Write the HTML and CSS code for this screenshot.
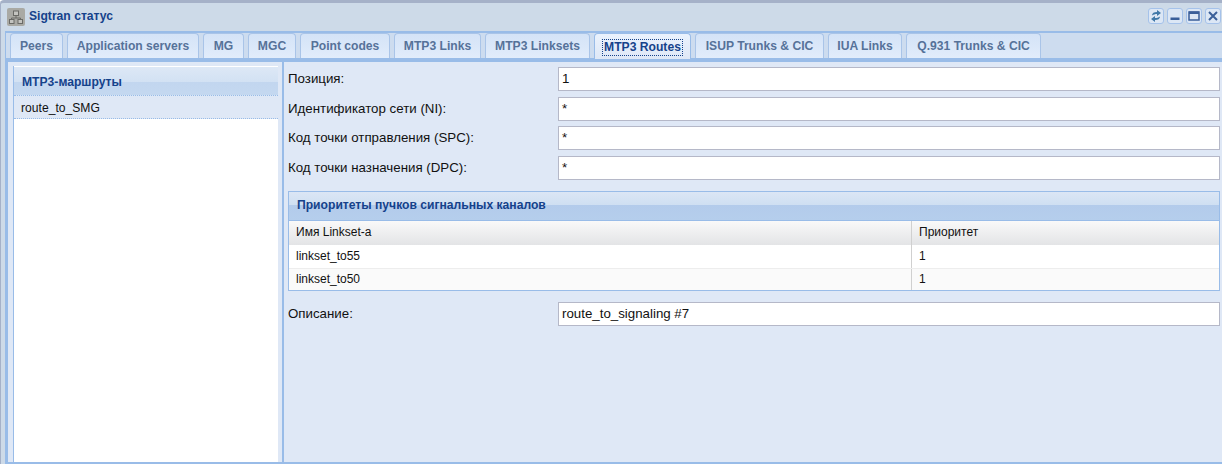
FILE: index.html
```html
<!DOCTYPE html>
<html lang="ru">
<head>
<meta charset="utf-8">
<title>Sigtran статус</title>
<link rel="stylesheet" href="styles.css">
</head>
<body>
<div class="window">
  <header class="titlebar">
    <span class="appicon">
      <svg width="18" height="18" viewBox="0 0 18 18"><rect width="18" height="18" rx="2" fill="#a9a9a4"/><path d="M9 7v3M4.500 12V10h9v2" fill="none" stroke="#6a6a66"/><rect x="6.500" y="3" width="5" height="4.500" fill="#c4c4c0" stroke="#6a6a66"/><rect x="2.500" y="11.500" width="4.500" height="4" fill="#c4c4c0" stroke="#6a6a66"/><rect x="11" y="11.500" width="4.500" height="4" fill="#c4c4c0" stroke="#6a6a66"/></svg>
    </span>
    <span class="title">Sigtran статус</span>
    <span class="tools">
      <span class="tool"><svg width="14" height="14" viewBox="0 0 14 14"><path d="M3 6.500C3 4 5 3 8 3V1l4 3-4 3V5C6 5 5 5.500 3 6.500zM11 7.500C11 10 9 11 6 11v2L2 10l4-3v2c2 0 3-.5 5-1.500z" fill="#3f78a8"/></svg></span>
      <span class="tool"><svg width="14" height="14" viewBox="0 0 14 14"><rect x="2.500" y="8.500" width="9" height="2.500" fill="#3a5f99"/></svg></span>
      <span class="tool"><svg width="14" height="14" viewBox="0 0 14 14"><rect x="2" y="3" width="10" height="8" fill="none" stroke="#3a5f99" stroke-width="1.500"/><rect x="2" y="2.500" width="10" height="2.500" fill="#3a5f99"/></svg></span>
      <span class="tool"><svg width="14" height="14" viewBox="0 0 14 14"><path d="M3 3l8 8M11 3l-8 8" stroke="#3a5f99" stroke-width="2"/></svg></span>
    </span>
  </header>
  <div class="tabpanel">
    <nav class="tabs">
      <a class="tab w-peers"><span>Peers</span></a>
      <a class="tab w-as"><span>Application servers</span></a>
      <a class="tab w-mg"><span>MG</span></a>
      <a class="tab w-mgc"><span>MGC</span></a>
      <a class="tab w-pc"><span>Point codes</span></a>
      <a class="tab w-links"><span>MTP3 Links</span></a>
      <a class="tab w-linksets"><span>MTP3 Linksets</span></a>
      <a class="tab active w-routes"><span>MTP3 Routes</span></a>
      <a class="tab w-isup"><span>ISUP Trunks &amp; CIC</span></a>
      <a class="tab w-iua"><span>IUA Links</span></a>
      <a class="tab w-q931"><span>Q.931 Trunks &amp; CIC</span></a>
    </nav>
    <div class="body">
      <aside class="side">
        <div class="sidebox">
          <div class="band side-band">МТР3-маршруты</div>
          <div class="side-item">route_to_SMG</div>
        </div>
      </aside>
      <main class="form">
        <div class="row"><label>Позиция:</label><div class="input">1</div></div>
        <div class="row"><label>Идентификатор сети (NI):</label><div class="input">*</div></div>
        <div class="row"><label>Код точки отправления (SPC):</label><div class="input">*</div></div>
        <div class="row"><label>Код точки назначения (DPC):</label><div class="input">*</div></div>
        <section class="group">
          <div class="band group-band">Приоритеты пучков сигнальных каналов</div>
          <div class="grid head"><div>Имя Linkset-а</div><div>Приоритет</div></div>
          <div class="grid line"><div>linkset_to55</div><div>1</div></div>
          <div class="grid line alt"><div>linkset_to50</div><div>1</div></div>
        </section>
        <div class="row"><label>Описание:</label><div class="input">route_to_signaling #7</div></div>
      </main>
    </div>
  </div>
</div>
</body>
</html>
```
FILE: styles.css
```css
html, body { margin: 0; height: 100%; overflow: hidden; }
body { font: 13px/16px "Liberation Sans", Arial, sans-serif; color: #111; background: #fff; }
.window { box-sizing: border-box; width: 1222px; height: 464px; background: #cddae8; border-top: 3px solid #a5b1c8; border-left: 1px solid #a5b1c8; border-radius: 4px 0 0 0; display: flex; flex-direction: column; padding-left: 4px; }
.titlebar { flex: none; height: 28px; display: flex; align-items: center; margin-left: -1px; padding: 0 1px 0 3px; }
.appicon { width: 18px; height: 18px; display: block; margin-top: -1px; }
.appicon svg { display: block; }
.title { margin-left: 4px; margin-top: -2px; font-weight: bold; font-size: 12.13px; color: #15428b; }
.tools { margin-left: auto; display: flex; gap: 3px; margin-top: -3px; }
.tool { box-sizing: border-box; width: 16px; height: 16px; background: #dce7f5; border: 1px solid #a5c2ea; border-radius: 3px; display: block; overflow: hidden; }
.tool svg { display: block; margin: 0; }
.tabpanel { flex: 1; min-height: 0; display: flex; flex-direction: column; border-top: 2px solid #99bce8; border-left: 1px solid #99bce8; background: #dfe8f6; }
.tabs { flex: none; height: 25px; display: flex; gap: 4px; padding-left: 4px; background: #cddcef; border-bottom: 4px solid #99bce8; }
.tab { box-sizing: border-box; height: 25px; display: flex; align-items: center; justify-content: center; background: linear-gradient(#d4e3f7, #e1ecfb); border: 1px solid #a9c4e8; border-bottom: 0; border-radius: 4px 4px 0 0; font-weight: bold; font-size: 12.13px; color: #567299; padding-top: 1px; }
.tab span { display: block; padding: 0 1px; border: 1px solid transparent; line-height: 15px; }
.tab.active { height: 26px; background: linear-gradient(#eaf2fd, #dfe8f6); color: #15428b; position: relative; border-color: #99bce8; }
.tab.active span { border: 1px dotted #15428b; }
.w-peers { width: 53px; } .w-as { width: 132px; } .w-mg { width: 41px; } .w-mgc { width: 48px; }
.w-pc { width: 90px; } .w-links { width: 87px; } .w-linksets { width: 105px; } .w-routes { width: 97px; }
.w-isup { width: 129px; } .w-iua { width: 74px; } .w-q931 { width: 135px; }
.body { flex: 1; min-height: 0; display: flex; border-bottom: 2px solid #99bce8; border-left: 3px solid #99bce8; margin-left: -1px; }
.side { flex: none; width: 265px; padding: 4px 4px 0 5px; border-right: 2px solid #99bce8; }
.sidebox { height: 100%; background: #fff; border-left: 1px solid #99bce8; display: flex; flex-direction: column; }
.band { font-weight: bold; font-size: 12.13px; color: #15428b; background: linear-gradient(#dbe6f5 0, #cfdff2 50%, #b3cbeb 50%, #b5ceec 100%); box-sizing: border-box; }
.side-band { height: 29px; padding: 7px 0 0 8px; border-bottom: 1px dotted #99bce8; margin-top: 1px; background: linear-gradient(#dde8f6 0, #d2e1f3 55%, #c2d6ef 55%, #c4d8f0 100%); }
.side-item { height: 23px; box-sizing: border-box; padding: 4px 0 0 7px; background: #dfe8f6; border-bottom: 1px dotted #99bce8; font-size: 12.13px; }
.form { flex: 1; min-width: 0; padding: 5px 2px 0 4px; }
.row { display: flex; align-items: center; height: 24px; margin-bottom: 5.500px; font-size: 13.3px; }
.row label { flex: none; width: 270px; }
.input { box-sizing: border-box; flex: 1; height: 24px; background: #fff; border: 1px solid #b5b8c8; padding: 3px 0 0 3px; font-size: 13.3px; line-height: 16px; }
.group { margin: 11px 0 11px; border: 1px solid #99bce8; background: #fff; }
.group-band { height: 29px; padding: 5px 0 0 8px; border-bottom: 1px solid #99bce8; background: linear-gradient(#dbe6f5 0, #cfdff2 45%, #b3cbeb 45%, #b5ceec 100%); }
.grid { display: grid; grid-template-columns: 622px 1fr; font-size: 12px; line-height: 16px; }
.grid > div { padding-left: 7px; padding-top: 3px; box-sizing: border-box; }
.grid > div + div { border-left: 1px solid #d0d0d0; }
.head { height: 24px; background: linear-gradient(#f9f9f9, #e3e4e6); }
.line { height: 23px; }
.line.alt { height: 21px; background: #fafafa; border-top: 1px solid #ededed; }
.line.alt > div { padding-top: 2px; }
```
